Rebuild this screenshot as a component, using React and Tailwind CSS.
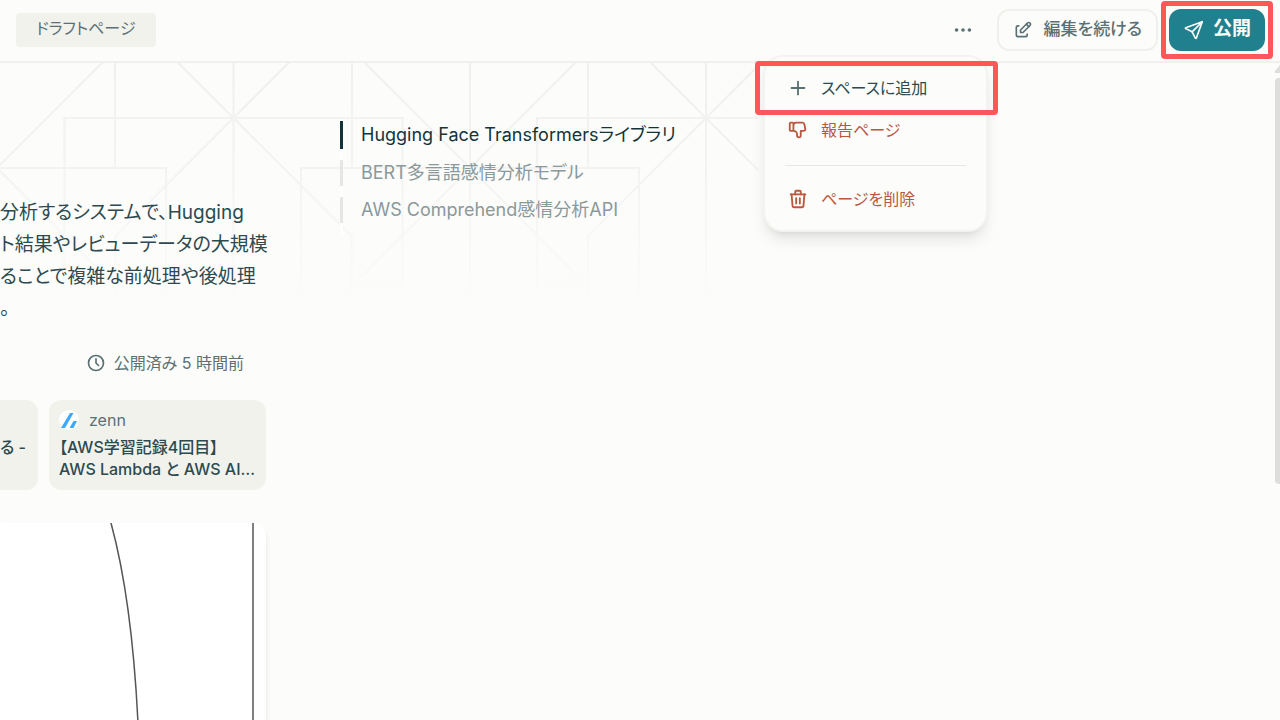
import React from 'react';
import { TbClock, TbDots, TbEdit, TbPlus, TbSend, TbThumbDown, TbTrash } from 'react-icons/tb';

const toc = [
  { title: 'Hugging Face Transformersライブラリ', active: true },
  { title: 'BERT多言語感情分析モデル' },
  { title: 'AWS Comprehend感情分析API' },
];

const summary = [
  '分析するシステムで、Hugging',
  'ト結果やレビューデータの大規模',
  'ることで複雑な前処理や後処理',
  '。',
];

// One star at height 118 and one at height 168, repeated along the header
function BackgroundPattern() {
  return (
    <svg className="absolute left-0 -top-px -z-10" width="758" height="240" fill="none" stroke="#f0f1ee" strokeWidth="2" aria-hidden="true">
      <defs>
        <linearGradient id="fade" x1="0" y1="0" x2="0" y2="1">
          <stop offset="0" stopColor="#fff" />
          <stop offset="0.4" stopColor="#fff" stopOpacity="0.8" />
          <stop offset="1" stopColor="#fff" stopOpacity="0" />
        </linearGradient>
        <mask id="fadeMask">
          <rect width="760" height="240" fill="url(#fade)" stroke="none" />
        </mask>
        <g id="starHigh">
          <path d="M0 0V240M-56 0L118 174V240M56 0L-118 174V240" />
          <path d="M-118 224H-169V56H169V224H118" />
        </g>
        <g id="starLow">
          <path d="M0 0V240M-106 0L118 224M106 0L-118 224" />
          <path d="M-169 240V106H169V240M-118 0V106M118 0V106" />
        </g>
      </defs>
      <g mask="url(#fadeMask)">
        <use href="#starLow" x="-3" />
        <use href="#starHigh" x="233.500" />
        <use href="#starLow" x="470" />
        <use href="#starHigh" x="706" />
      </g>
    </svg>
  );
}

function ZennLogo() {
  return (
    <svg viewBox="0 0 20 20" className="size-5" aria-hidden="true">
      <circle cx="10" cy="10" r="10" fill="#fff" />
      <path d="M2 18h4L14.500 3H11z" fill="#3ea8ff" />
      <path d="M10.500 18h4L18 11h-3.500z" fill="#3ea8ff" />
    </svg>
  );
}

function TopBar() {
  return (
    <header className="flex h-[63px] items-center justify-between border-b-2 border-[#f0f0ed] pb-0.5 pl-4 pr-[15px]">
      <span className="rounded bg-[#f2f2ed] px-5 pb-1.5 pt-0.5 text-base leading-[26px] text-[#5a7075]">ドラフトページ</span>
      <div className="flex items-center gap-[11px]">
        <button aria-label="その他" className="mr-3 text-[#5a7075]">
          <TbDots size={22} />
        </button>
        <button className="flex h-[42px] items-center gap-2.5 rounded-xl border-2 border-[#f0f0ed] px-3.5 text-[17px] font-medium text-[#5a7075]">
          <TbEdit size={20} />
          編集を続ける
        </button>
        <button className="relative flex h-[42px] items-center gap-2 rounded-xl bg-[#21808d] px-3.5 text-[19px] font-bold text-[#fcfcfa]">
          <TbSend size={22} strokeWidth={1.8} />
          公開
          <span className="pointer-events-none absolute -inset-2 rounded border-5 border-[#ff5757]" />
        </button>
      </div>
    </header>
  );
}

function PageMenu() {
  return (
    <div role="menu" className="absolute right-[292px] top-[55px] z-10 w-[225px] rounded-[20px] border-2 border-[#f3f3f0] bg-[#fcfcfa] px-5 pb-3 pt-2.5 text-base shadow-lg">
      <button role="menuitem" className="relative flex h-[42px] w-full items-center gap-3 px-0.5 text-[#2c4a50]">
        <TbPlus size={22} className="text-[#5a7075]" />
        スペースに追加
        <span className="pointer-events-none absolute -inset-y-1.5 -left-7.5 -right-8 rounded border-5 border-[#ff5757]" />
      </button>
      <button role="menuitem" className="flex h-[42px] w-full items-center gap-3 px-0.5 text-[#b9573f]">
        <TbThumbDown size={22} />
        報告ページ
      </button>
      <hr className="my-3.5 border-[#e8e8e2]" />
      <button role="menuitem" className="flex h-[38px] w-full items-center gap-3 px-0.5 text-[#b9573f]">
        <TbTrash size={22} />
        ページを削除
      </button>
    </div>
  );
}

function Article() {
  return (
    <article className="w-[266px] shrink-0 pt-[134px]">
      <div>
        {summary.map((line) => (
          <p key={line} className="whitespace-nowrap text-[19px] leading-8 text-[#2c4a50]">{line}</p>
        ))}
      </div>
      <div className="mt-[26px] flex items-center justify-end gap-2 pr-[22px] text-base leading-6 text-[#5a7075]">
        <TbClock size={20} />
        公開済み 5 時間前
      </div>
      <div className="mt-[25px] flex justify-between">
        <a href="#source" className="h-[90px] w-[38px] rounded-r-xl bg-[#f2f2ed] pt-9 text-base font-medium leading-[22px] text-[#2c4a50]">る -</a>
        <a href="#zenn" className="h-[90px] w-[217px] rounded-xl bg-[#f2f2ed] px-2.5 py-2.5 text-[#2c4a50]">
          <span className="flex items-center gap-2.5 leading-5 text-[#5a7075]"><ZennLogo />zenn</span>
          <span className="mt-1.5 block whitespace-nowrap font-medium leading-[22px]">【AWS学習記録4回目】</span>
          <span className="block whitespace-nowrap font-medium leading-[22px]">AWS Lambda と AWS AI…</span>
        </a>
      </div>
      <figure className="mt-[33px] rounded-tr-xl bg-white shadow-md">
        <svg className="w-full" height="240" fill="none" stroke="#555" strokeWidth="1.5" role="img" aria-label="diagram">
          <path d="M111 0Q132 77 138 200V240M253 0V240" />
        </svg>
      </figure>
    </article>
  );
}

function ScrollBar() {
  return (
    <div className="absolute right-0 top-[65px] flex w-[5px] flex-col gap-[5px]" aria-hidden="true">
      <svg width="5" height="8" fill="#dedfdc"><path d="M0 8V6L5 0V8z" /></svg>
      <div className="h-[406px] rounded-l bg-[#dedfdc]" />
    </div>
  );
}

export default function App() {
  return (
    <div className="relative isolate h-screen overflow-hidden bg-[#fcfcfa] font-['Inter','Noto_Sans_CJK_JP',sans-serif] [font-feature-settings:'palt']">
      <TopBar />
      <PageMenu />
      <main className="relative isolate flex items-start">
        <BackgroundPattern />
        <Article />
        <nav className="ml-[74px] mt-[58px] flex flex-col gap-[11px] border-l-3 border-white pb-3 text-lg">
          {toc.map((item) => (
            <a
              key={item.title}
              href="#section"
              className={
                item.active
                  ? '-ml-[3px] border-l-3 border-[#13343b] pl-[18px] leading-7 text-[#13343b]'
                  : '-ml-[3px] border-l-3 border-[#e6e7e4] pl-[18px] leading-[26px] text-[#8a999b]'
              }
            >
              {item.title}
            </a>
          ))}
        </nav>
      </main>
      <ScrollBar />
    </div>
  );
}
